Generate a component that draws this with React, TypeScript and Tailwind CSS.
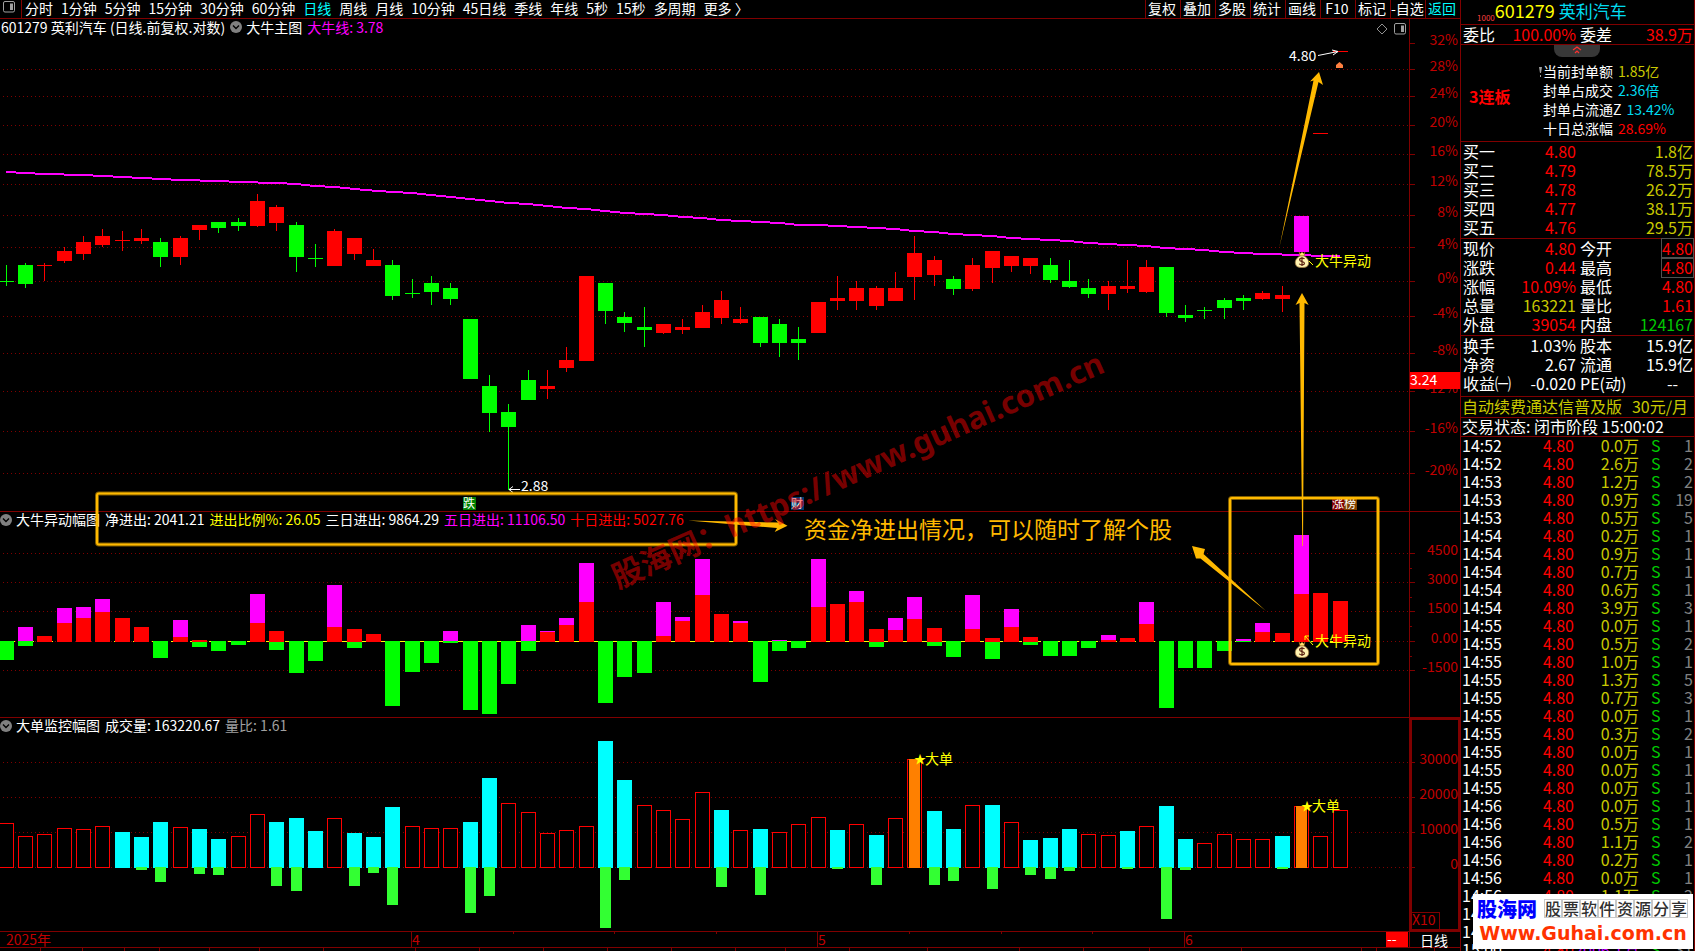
import type { ReactNode } from "react";

const RED = "#ff0000";
const GREEN = "#00ff00";
const PINK = "#ff00ff";
const LINE = "#800000";
const AXIS = "#c00000";
const GOLD = "#ffb900";

// x of the middle pixel of bar i
const cx = (i: number) => Math.floor(6 + (i * 58) / 3);

// colour, open/close top, open/close bottom, high, low
const candles: [string, number, number, number, number][] = [
  ["g", 281, 282, 265, 286], ["g", 265, 284, 263, 288], ["r", 265, 266, 263, 281], ["r", 251, 261, 247, 263],
  ["r", 242, 254, 236, 260], ["r", 236, 245, 229, 247], ["r", 240, 241, 231, 251], ["r", 238, 241, 229, 244],
  ["g", 242, 257, 238, 267], ["r", 238, 257, 236, 265], ["r", 225, 230, 225, 240], ["g", 222, 228, 222, 233],
  ["g", 222, 226, 218, 231], ["r", 201, 226, 194, 227], ["r", 207, 223, 205, 231], ["g", 225, 257, 222, 272],
  ["g", 258, 259, 244, 267], ["r", 231, 266, 229, 266], ["r", 238, 254, 238, 260], ["r", 260, 266, 249, 266],
  ["g", 265, 296, 260, 300], ["g", 293, 294, 279, 298], ["g", 283, 292, 276, 305], ["g", 288, 299, 283, 305],
  ["g", 319, 379, 319, 379], ["g", 386, 413, 375, 432], ["g", 412, 427, 404, 490], ["g", 380, 400, 370, 400],
  ["r", 386, 389, 370, 399], ["r", 360, 368, 347, 372], ["r", 276, 361, 276, 361], ["g", 283, 311, 283, 324],
  ["g", 317, 323, 312, 332], ["g", 327, 330, 307, 347], ["r", 324, 333, 324, 334], ["r", 327, 330, 319, 334],
  ["r", 312, 328, 305, 328], ["r", 300, 318, 291, 324], ["r", 319, 323, 307, 324], ["g", 317, 343, 317, 347],
  ["g", 324, 343, 319, 357], ["g", 339, 343, 327, 360], ["r", 302, 333, 302, 333], ["r", 298, 301, 276, 310],
  ["r", 288, 301, 281, 310], ["r", 288, 306, 286, 310], ["r", 288, 301, 272, 301], ["r", 253, 277, 236, 300],
  ["r", 260, 275, 256, 286], ["g", 279, 289, 276, 295], ["r", 265, 289, 258, 291], ["r", 251, 268, 251, 283],
  ["r", 256, 266, 256, 272], ["r", 258, 266, 258, 274], ["g", 265, 280, 258, 283], ["g", 281, 287, 260, 288],
  ["g", 288, 294, 279, 298], ["r", 286, 294, 281, 310], ["r", 286, 289, 260, 293], ["r", 267, 292, 260, 293],
  ["g", 267, 313, 267, 317], ["g", 315, 318, 305, 322], ["g", 310, 311, 307, 319], ["g", 300, 308, 298, 319],
  ["g", 298, 301, 295, 310], ["r", 293, 299, 291, 300], ["r", 295, 299, 286, 312], ["m", 216, 252, 216, 252],
  ["r", 133, 134, 133, 134], ["r", 51, 52, 51, 52],
];

const maLine =
  "6,172 25,173 44,174 83,175 103,176 122,177 142,178 180,180 219,181 238,182 277,183 296,184 315,186 335,187 345,188 365,190 393,192 412,193 431,195 451,197 470,199 490,201 509,203 528,204 548,206 567,208 586,209 605,211 625,213 644,214 663,215 683,217 702,218 721,220 741,221 760,222 780,223 799,225 818,225 837,226 857,227 876,228 895,229 914,231 934,232 953,234 972,235 992,236 1011,238 1030,239 1050,240 1069,241 1088,243 1107,244 1127,245 1146,246 1165,248 1185,249 1204,250 1224,252 1243,253 1262,254 1301,255 1320,256 1340,256";

// top of the pink part, top of the red part, bottom of the green part (0 = none)
const flows: [number, number, number][] = [
  [0, 0, 660], [627, 0, 646], [0, 636, 0], [608, 623, 0], [607, 618, 0], [599, 612, 0], [0, 618, 0],
  [0, 627, 0], [0, 0, 658], [620, 637, 0], [0, 640, 647], [0, 0, 651], [0, 0, 645], [594, 623, 0],
  [0, 631, 650], [0, 0, 673], [0, 0, 661], [585, 627, 0], [0, 629, 648], [0, 634, 0], [0, 0, 706],
  [0, 0, 672], [0, 0, 663], [631, 0, 643], [0, 0, 710], [0, 0, 714], [0, 0, 684], [625, 0, 651],
  [631, 632, 0], [618, 625, 0], [563, 602, 0], [0, 0, 703], [0, 0, 677], [0, 0, 673], [602, 636, 0],
  [617, 621, 0], [559, 595, 0], [0, 614, 0], [621, 623, 0], [0, 0, 682], [640, 0, 651], [0, 0, 648],
  [559, 607, 0], [0, 604, 0], [591, 602, 0], [0, 629, 647], [618, 630, 0], [597, 619, 0], [0, 628, 646],
  [0, 0, 657], [595, 629, 0], [0, 638, 659], [609, 627, 0], [0, 637, 645], [0, 0, 656], [0, 0, 656],
  [0, 0, 648], [635, 640, 0], [0, 638, 0], [602, 624, 0], [0, 0, 708], [0, 0, 668], [0, 0, 668],
  [0, 0, 651], [639, 0, 642], [623, 632, 0], [0, 633, 0], [535, 594, 0], [0, 593, 0], [0, 601, 0],
];

// kind (h hollow, c cyan, o big order), top, bottom of the green part
const volumes: [string, number, number][] = [
  ["h", 823, 0], ["h", 836, 0], ["h", 834, 0], ["h", 828, 0], ["h", 829, 0], ["h", 826, 0], ["c", 832, 0],
  ["c", 837, 870], ["c", 822, 882], ["h", 827, 0], ["c", 829, 874], ["c", 839, 875], ["h", 836, 0], ["h", 814, 0],
  ["c", 822, 886], ["c", 818, 891], ["c", 831, 0], ["h", 818, 0], ["c", 833, 886], ["c", 837, 873], ["c", 807, 905],
  ["h", 826, 0], ["h", 828, 0], ["h", 828, 0], ["c", 822, 913], ["c", 778, 896], ["h", 803, 0], ["h", 812, 0],
  ["h", 833, 0], ["h", 830, 0], ["h", 826, 0], ["c", 741, 928], ["c", 780, 880], ["h", 805, 0], ["h", 810, 0],
  ["h", 819, 0], ["h", 792, 0], ["c", 810, 887], ["h", 830, 0], ["c", 829, 895], ["h", 832, 0], ["h", 824, 0],
  ["h", 817, 0], ["c", 830, 869], ["h", 824, 0], ["c", 835, 885], ["h", 818, 0], ["o", 759, 0], ["c", 811, 885],
  ["c", 829, 881], ["h", 805, 0], ["c", 805, 889], ["h", 822, 0], ["c", 840, 875], ["c", 838, 879], ["c", 829, 871],
  ["h", 834, 0], ["h", 835, 0], ["c", 831, 869], ["h", 826, 0], ["c", 806, 919], ["c", 839, 870], ["h", 843, 0],
  ["h", 834, 0], ["h", 839, 0], ["h", 839, 0], ["c", 836, 869], ["o", 806, 0], ["h", 836, 0], ["h", 810, 0],
];

const periods = [
  "分时", "1分钟", "5分钟", "15分钟", "30分钟", "60分钟", "日线", "周线", "月线", "10分钟",
  "45日线", "季线", "年线", "5秒", "15秒", "多周期", "更多 〉",
];
const tools = ["复权", "叠加", "多股", "统计", "画线", "F10", "标记", "-自选", "返回"];

const percentAxis: [string, number][] = [
  ["32%", 43], ["28%", 69], ["24%", 96], ["20%", 125], ["16%", 154], ["12%", 184], ["8%", 215],
  ["4%", 247], ["0%", 281], ["-4%", 316], ["-8%", 353], ["-12%", 391], ["-16%", 431], ["-20%", 473],
];
const flowAxis: [string, number][] = [["4500", 553], ["3000", 582], ["1500", 611], ["0.00", 641], ["-1500", 670]];
const volumeAxis: [string, number][] = [["30000", 762], ["20000", 797], ["10000", 832], ["0", 867]];

const bids = [
  ["买一", "4.80", "1.8亿"],
  ["买二", "4.79", "78.5万"],
  ["买三", "4.78", "26.2万"],
  ["买四", "4.77", "38.1万"],
  ["买五", "4.76", "29.5万"],
];

const R = "text-[#ff0000]";
const Y = "text-[#c8c800]";
const G = "text-[#00c800]";
const W = "text-white";

const quotes = [
  ["现价", "4.80", R, "今开", "4.80", R, "box"],
  ["涨跌", "0.44", R, "最高", "4.80", R, "box"],
  ["涨幅", "10.09%", R, "最低", "4.80", R, ""],
  ["总量", "163221", Y, "量比", "1.61", R, ""],
  ["外盘", "39054", R, "内盘", "124167", G, ""],
];
const basics = [
  ["换手", "1.03%", W, "股本", "15.9亿", W, ""],
  ["净资", "2.67", W, "流通", "15.9亿", W, ""],
  ["收益㈠", "-0.020", W, "PE(动)", "--", W, "dash"],
];

const ticks = [
  ["14:52", "0.0", "1"], ["14:52", "2.6", "2"], ["14:53", "1.2", "2"], ["14:53", "0.9", "19"], ["14:53", "0.5", "5"],
  ["14:54", "0.2", "1"], ["14:54", "0.9", "1"], ["14:54", "0.7", "1"], ["14:54", "0.6", "1"], ["14:54", "3.9", "3"],
  ["14:55", "0.0", "1"], ["14:55", "0.5", "2"], ["14:55", "1.0", "1"], ["14:55", "1.3", "5"], ["14:55", "0.7", "3"],
  ["14:55", "0.0", "1"], ["14:55", "0.3", "2"], ["14:55", "0.0", "1"], ["14:55", "0.0", "1"], ["14:55", "0.0", "1"],
  ["14:56", "0.0", "1"], ["14:56", "0.5", "1"], ["14:56", "1.1", "2"], ["14:56", "0.2", "1"], ["14:56", "0.0", "1"],
  ["14:56", "1.1", "2"], ["14:56", "0.1", "1"], ["14:56", "0.4", "1"], ["15:00", "2006.1", "31"],
];

function PanelIcon() {
  return (
    <svg viewBox="0 0 12 12" className="h-3 w-3" fill="none">
      <rect x="0.5" y="0.5" width="11" height="10.5" rx="1.5" stroke="#a0a0a0" />
      <rect x="7" y="2.5" width="3" height="6.5" fill="#a0a0a0" />
    </svg>
  );
}

function Toggle({ label }: { label: string }) {
  return (
    <button aria-label={label} className="h-3 w-3 shrink-0">
      <svg viewBox="0 0 12 12" className="h-3 w-3">
        <circle cx="6" cy="6" r="6" fill="#808080" />
        <path d="M3 4.5 L6 7.5 L9 4.5" stroke="#000" strokeWidth="1.4" fill="none" />
      </svg>
    </button>
  );
}

function Grid({ rows, skipFirst }: { rows: [string, number][]; skipFirst?: boolean }) {
  return (
    <g shapeRendering="crispEdges">
      {rows.map(([label, y], i) => (
        <g key={label}>
          {!(skipFirst && i === 0) && (
            <line x1="3" x2="1409" y1={y + 0.5} y2={y + 0.5} stroke={LINE} strokeDasharray="1 3" />
          )}
          <rect x="1410" y={y} width="5" height="1" fill={LINE} />
        </g>
      ))}
    </g>
  );
}

function AxisLabels({ rows }: { rows: [string, number][] }) {
  return (
    <g fill={AXIS} textAnchor="end">
      {rows.map(([label, y]) => (
        <text key={label} x="1458" y={y + 2}>
          {label}
        </text>
      ))}
    </g>
  );
}

function Panel({ top, height, children, header }: { top: number; height: number; children: ReactNode; header?: ReactNode }) {
  return (
    <section className="relative">
      <svg viewBox={`0 ${top} 1460 ${height}`} className="block w-full text-sm">
        {children}
        <rect x="1409" y={top} width="1" height={height} fill={LINE} />
        <rect x="0" y={top + height - 1} width="1460" height="1" fill={LINE} />
      </svg>
      {header}
    </section>
  );
}

function MoneyBag({ x, y }: { x: number; y: number }) {
  return (
    <g transform={`translate(${x} ${y})`}>
      <path d="M-3 -9 L-1.5 -7.5 L0 -9 L1.5 -7.5 L3 -9 L2 -5 L-2 -5 Z" fill="#ffe070" stroke="#8a5a00" strokeWidth="0.5" />
      <path d="M-2 -5 C-7 -2 -7 1 -6.5 3 C-6 6 -3 6.5 0 6.5 C3 6.5 6 6 6.5 3 C7 1 7 -2 2 -5 Z" fill="#fff3b0" stroke="#a07840" strokeWidth="0.8" />
      <path d="M2.5 -2 C1.5 -3.4 -2.6 -3.2 -2.4 -1 C-2.2 1 2.6 0.2 2.5 2.4 C2.3 4.4 -1.8 4.4 -2.7 2.8 M0 -4 V5" stroke="#5a2010" strokeWidth="1.2" fill="none" />
    </g>
  );
}

function Signal({ y }: { y: number }) {
  return (
    <g>
      <path d={`M1313 ${y + 4} L1305 ${y - 5} M1305 ${y - 1} V${y - 5} H1309`} stroke="#ffff00" fill="none" />
      <text x="1315" y={y + 5} fill="#ffff00">大牛异动</text>
    </g>
  );
}

function MainChart() {
  return (
    <Panel
      top={19}
      height={493}
      header={
        <>
          <div className="absolute top-0 left-px flex items-center gap-1 text-sm leading-4 whitespace-nowrap">
            <h1 className="pr-px">601279 英利汽车 (日线.前复权.对数)</h1>
            <Toggle label="大牛主图" />
            <span>大牛主图</span>
            <span className="pl-px text-[#ff00ff]">大牛线: 3.78</span>
          </div>
          <div className="absolute top-1 right-[54px] flex items-center gap-1.5">
            <button aria-label="标注">
              <svg viewBox="0 0 12 12" className="h-3 w-3" fill="none">
                <path d="M6 1 L11 6 L6 11 L1 6 Z" stroke="#909090" />
              </svg>
            </button>
            <button aria-label="侧栏">
              <PanelIcon />
            </button>
          </div>
        </>
      }
    >
      <Grid rows={percentAxis} skipFirst />
      <AxisLabels rows={percentAxis} />
      <g shapeRendering="crispEdges">
        {candles.map(([kind, top, bottom, high, low], i) => {
          const fill = kind === "g" ? GREEN : kind === "r" ? RED : PINK;
          return (
            <g key={i} fill={fill}>
              <rect x={cx(i)} y={high} width="1" height={low - high} />
              <rect x={cx(i) - 7} y={top} width="15" height={bottom - top} />
            </g>
          );
        })}
        <polyline points={maLine} fill="none" stroke={PINK} strokeWidth="2" />
      </g>
      <MoneyBag x={1302} y={261} />
      <path d="M1309 261 L1313 265" stroke="#ffff00" />
      <text x="1315" y="266" fill="#ffff00">大牛异动</text>

      <rect x="1410" y="372" width="50" height="17" fill={RED} />
      <text x="1410" y="385" fill="#fff">3.24</text>

      <path d="M520 489.500 H509 M513 486.500 L509 489.500 L513 492.500" stroke="#fff" fill="none" />
      <text x="521" y="491" fill="#fff">2.88</text>
      <text x="1289" y="61" fill="#fff">4.80</text>
      <path d="M1318 55.500 L1338 51.500 M1332 50 L1338 51.500 L1333 55" stroke="#fff" fill="none" />
      <path d="M1336 68 V65 L1339.500 62 L1343 65 V68 Z" fill="#ff8040" />

      <g fontSize="12" fill="#fff">
        <rect x="463" y="497" width="13" height="13" fill="#008000" />
        <text x="463" y="508">跌</text>
        <rect x="791" y="497" width="13" height="13" fill="#003870" />
        <text x="791" y="508">财</text>
        <rect x="1332" y="498" width="12" height="12" fill="#800000" />
        <text x="1332" y="508">涨</text>
        <rect x="1344" y="498" width="13" height="12" fill="#804000" />
        <text x="1344" y="508">榜</text>
      </g>
    </Panel>
  );
}

function FlowChart() {
  return (
    <Panel
      top={512}
      height={206}
      header={
        <div className="absolute top-0 left-0 flex items-center gap-[5px] text-sm leading-[15px] whitespace-nowrap">
          <div className="flex items-center gap-1">
            <Toggle label="大牛异动幅图" />
            <h2>大牛异动幅图</h2>
          </div>
          <span>净进出: 2041.21</span>
          <span className="text-[#ffff00]">进出比例%: 26.05</span>
          <span>三日进出: 9864.29</span>
          <span className="text-[#ff00ff]">五日进出: 11106.50</span>
          <span className="text-[#ff0000]">十日进出: 5027.76</span>
        </div>
      }
    >
      <Grid rows={flowAxis} />
      <AxisLabels rows={flowAxis} />
      <g shapeRendering="crispEdges">
        {[568, 597, 626, 656].map((y) => (
          <rect key={y} x="1410" y={y} width="2" height="1" fill={LINE} />
        ))}
        <line x1="0" x2="1347" y1="641.5" y2="641.5" stroke="#ffff00" strokeDasharray="15 4" />
        {flows.map(([pink, red, green], i) => (
          <g key={i}>
            {pink > 0 && <rect x={cx(i) - 7} y={pink} width="15" height={(red || 641) - pink} fill={PINK} />}
            {red > 0 && <rect x={cx(i) - 7} y={red} width="15" height={642 - red} fill={RED} />}
            {green > 0 && (
              <rect x={cx(i) - 7} y={red > 0 ? 642 : 641} width="15" height={green - (red > 0 ? 642 : 641)} fill={GREEN} />
            )}
          </g>
        ))}
      </g>
      <MoneyBag x={1302} y={651} />
      <Signal y={641} />
    </Panel>
  );
}

function VolumeChart() {
  return (
    <Panel
      top={718}
      height={214}
      header={
        <div className="absolute top-0 left-0 flex items-center gap-[5px] text-sm leading-[15px] whitespace-nowrap">
          <div className="flex items-center gap-1">
            <Toggle label="大单监控幅图" />
            <h2>大单监控幅图</h2>
          </div>
          <span>成交量: 163220.67</span>
          <span className="text-[#a0a0a0]">量比: 1.61</span>
        </div>
      }
    >
      <Grid rows={volumeAxis} />
      <AxisLabels rows={volumeAxis} />
      <g shapeRendering="crispEdges">
        {[780, 815, 850].map((y) => (
          <rect key={y} x="1410" y={y} width="2" height="1" fill={LINE} />
        ))}
        {volumes.map(([kind, top, green], i) => (
          <g key={i}>
            {kind === "c" ? (
              <rect x={cx(i) - 7} y={top} width="15" height={868 - top} fill="#00ffff" />
            ) : (
              <rect x={cx(i) - 6.5} y={top + 0.5} width="14" height={867 - top} fill="#000" stroke={RED} />
            )}
            {kind === "o" && <rect x={cx(i) - 5} y={top} width="11" height={868 - top} fill="#ff8000" />}
            {green > 0 && <rect x={cx(i) - 5} y="867" width="11" height={green - 867} fill="#33ff33" />}
          </g>
        ))}
        <rect x="1411" y="719" width="48" height="211" fill="none" stroke={LINE} strokeWidth="2" />
        <rect x="1410.5" y="912.5" width="29" height="18" fill="none" stroke={LINE} />
      </g>
      <g fill="#ffff00">
        <text x="914" y="764" fontSize="12">★</text>
        <text x="925" y="764">大单</text>
        <text x="1301" y="811" fontSize="12">★</text>
        <text x="1312" y="811">大单</text>
      </g>
      <text x="1412" y="925" fill={AXIS}>X10</text>
    </Panel>
  );
}

function TimeAxis() {
  const months: [string, number][] = [["4", 411], ["5", 817], ["6", 1184]];
  const upper = [513, 614, 716, 909, 1001, 1092];
  const lower = [
    40, 82, 124, 159, 209, 259, 323, 415, 479, 543, 607, 671, 735, 785, 849, 927, 1019, 1083, 1149, 1241, 1361, 1376, 1434,
  ];
  return (
    <svg viewBox="0 932 1460 19" className="block w-full overflow-visible text-sm">
      <g fill={LINE}>
        <rect x="0" y="947" width="1460" height="1" />
        <rect x="1409" y="932" width="1" height="16" />
        {upper.map((x) => <rect key={x} x={x} y="932" width="1" height="2" />)}
        {lower.map((x) => <rect key={x} x={x} y="948" width="1" height="3" />)}
        {months.map(([m, x]) => <rect key={m} x={x} y="932" width="1" height="15" />)}
      </g>
      <g fill={AXIS}>
        <text x="6" y="945">2025年</text>
        {months.map(([m, x]) => <text key={m} x={x + 1} y="945">{m}</text>)}
      </g>
      <rect x="1386" y="932" width="22" height="15" fill={RED} />
      <text x="1387" y="944" fill="#fff">--</text>
      <text x="1420" y="946" fill="#fff">日线</text>
    </svg>
  );
}

// Hand-made marks on top of the three charts
function Annotations() {
  return (
    <svg viewBox="0 0 1460 951" className="pointer-events-none absolute top-0 left-0 w-full">
      <g fill="none" stroke={GOLD}>
        <rect x="97" y="493.500" width="639" height="51" rx="2" strokeWidth="4" strokeOpacity="0.5" />
        <rect x="97" y="493.500" width="639" height="51" rx="2" strokeWidth="2" />
        <rect x="1230" y="498" width="148" height="166" rx="2" strokeWidth="4" strokeOpacity="0.5" />
        <rect x="1230" y="498" width="148" height="166" rx="2" strokeWidth="2" />
      </g>
      <g fill={GOLD}>
        <path d="M688 520.500 L778 522.500 L775 519 L787.500 525.700 L774.700 532 L777 528 Z" />
        <path d="M1266 611 L1200.500 558.500 L1196 558.500 L1192 546 L1205 549 L1203.500 554 Z" />
        <path d="M1279.300 247.500 L1313.500 80.500 L1310 81.500 L1319 72 L1323 85 L1318.500 82 Z" />
        <path d="M1302.300 546 L1299.500 303 L1295.500 305 L1302 293 L1308.700 305 L1304.500 303 L1303 546 Z" />
      </g>
      <text x="804" y="538" fontSize="23" fill={GOLD}>资金净进出情况，可以随时了解个股</text>
      <text
        x="618"
        y="589"
        transform="rotate(-24 618 589)"
        fontSize="31"
        fontWeight="700"
        fill={RED}
        fillOpacity="0.48"
        className="font-['Noto_Sans','Noto_Sans_CJK_SC',sans-serif]"
      >
        股海网：https://www.guhai.com.cn
      </text>
    </svg>
  );
}

function QuoteTable({ rows }: { rows: string[][] }) {
  return (
    <table className="w-full table-fixed border-collapse leading-[19px]">
      <colgroup>
        <col className="w-[50px]" />
        <col className="w-[65px]" />
        <col className="w-[54px]" />
        <col />
      </colgroup>
      <tbody>
        {rows.map(([a, av, ac, b, bv, bc, mark]) => (
          <tr key={a} className="h-[19px] whitespace-nowrap">
            <th scope="row" className="p-0 pl-0.5 text-left font-normal">{a}</th>
            <td className={`p-0 text-right ${ac}`}>{av}</td>
            <th scope="row" className="p-0 pl-1 text-left font-normal">{b}</th>
            <td className={`p-0 text-right ${bc} ${mark === "dash" ? "pr-4" : "pr-px"}`}>
              <span className={mark === "box" ? "inline-block outline outline-[#505050]" : ""}>{bv}</span>
            </td>
          </tr>
        ))}
      </tbody>
    </table>
  );
}

function Sidebar() {
  return (
    <aside className="relative w-[235px] shrink-0 overflow-hidden border-x border-[#800000] text-base">
      <header className="flex h-[25px] border-b border-[#800000] pl-4 leading-[21px] whitespace-nowrap">
        <span className="self-end text-[8px] leading-3 text-[#ff4040]">1000</span>
        <span className="text-lg leading-[21px] text-[#ffff00]">601279</span>
        <h2 className="pl-1 text-[17px] leading-[21px] text-[#00dcf0]">英利汽车</h2>
      </header>
      <div className="h-5 border-b border-[#800000]">
        <QuoteTable rows={[["委比", "100.00%", R, "委差", "38.9万", R, ""]]} />
      </div>

      <div className="relative flex h-[97px] items-center border-b border-[#800000]">
        <button aria-label="收起" className="absolute top-0 left-[93px] flex h-3 w-[46px] justify-center rounded-b-lg bg-[#383838]">
          <svg viewBox="0 0 10 8" className="mt-px h-2 w-[10px]" fill="none" stroke="#ff3030" strokeWidth="1.2">
            <path d="M1 4 L5 1 L9 4 M3 7 L5 5 L7 7" />
          </svg>
        </button>
        <div className="w-[78px] pt-1.5 pl-2 font-bold text-[#ff0000]">3连板</div>
        <ul className="pt-3.5 text-sm leading-[19px] whitespace-nowrap">
          <li className="flex items-center">
            <svg viewBox="0 0 4 10" className="h-[10px] w-1" fill="#a0a0a0">
              <path d="M0 0 H3 L2 6 H1 Z M1 8 H2 V10 H1 Z" />
            </svg>
            <span>当前封单额</span>
            <span className="pl-[5px] text-[#c8c800]">1.85亿</span>
          </li>
          <li className="flex gap-[5px] pl-1">封单占成交<span className="text-[#00dcf0]">2.36倍</span></li>
          <li className="flex gap-[5px] pl-1">封单占流通Z<span className="text-[#00dcf0]">13.42%</span></li>
          <li className="flex gap-[5px] pl-1">十日总涨幅<span className="text-[#ff0000]">28.69%</span></li>
        </ul>
      </div>

      <div className="h-[97px] border-b border-[#800000]">
        <table className="w-full table-fixed border-collapse leading-[19px]">
          <tbody>
            {bids.map(([name, price, amount]) => (
              <tr key={name} className="h-[19px]">
                <th scope="row" className="w-[50px] p-0 pl-0.5 text-left font-normal">{name}</th>
                <td className="w-[65px] p-0 text-right text-[#ff0000]">{price}</td>
                <td className="p-0 pr-px text-right text-[#c8c800]">{amount}</td>
              </tr>
            ))}
          </tbody>
        </table>
      </div>
      <div className="h-[97px] border-b border-[#800000]">
        <QuoteTable rows={quotes} />
      </div>
      <div className="h-[61px] border-b border-[#800000]">
        <QuoteTable rows={basics} />
      </div>
      <a href="#renew" className="flex h-[21px] justify-between border-b border-[#800000] pr-1.5 pl-px leading-[18px] whitespace-nowrap text-[#c8c800]">
        <span>自动续费通达信普及版</span>
        <span>30元/月</span>
      </a>
      <p className="h-[19px] border-b border-[#800000] pl-px leading-4 whitespace-nowrap">交易状态: 闭市阶段 15:00:02</p>

      <table className="w-full table-fixed border-collapse leading-4">
        <colgroup>
          <col className="w-[50px]" />
          <col className="w-[63px]" />
          <col className="w-[65px]" />
          <col className="w-[25px]" />
          <col />
        </colgroup>
        <tbody>
          {ticks.map(([time, amount, count], i) => (
            <tr key={i} className="h-[18px]">
              <td className="p-0 pb-0.5 pl-px">{time}</td>
              <td className="p-0 pb-0.5 text-right text-[#ff0000]">4.80</td>
              <td className={`p-0 pb-0.5 text-right ${i === 28 ? "text-[#c000ff]" : "text-[#c8c800]"}`}>{amount}万</td>
              <td className="p-0 pb-0.5 pl-3 text-[#00c800]">S</td>
              <td className="p-0 pr-px pb-0.5 text-right text-[#808080]">{count}</td>
            </tr>
          ))}
        </tbody>
      </table>
    </aside>
  );
}

function SiteBanner() {
  return (
    <a href="#guhai" className="absolute right-0.5 bottom-0.5 flex h-[55px] w-[220px] flex-col items-center justify-center bg-white whitespace-nowrap">
      <span className="flex w-full items-center justify-between pr-[5px] pl-1">
        <strong className="text-xl leading-6 font-black text-[#0000ff]">股海网</strong>
        <span className="flex text-base leading-[17px] font-medium text-[#303030]">
          {"股票软件资源分享".split("").map((c) => (
            <span key={c} className="w-[18px] border border-[#c8c8c8] text-center">{c}</span>
          ))}
        </span>
      </span>
      <strong className="pb-0.5 font-['DejaVu_Sans',sans-serif] text-[19px] leading-6 font-black text-[#ff3300]">Www.Guhai.com.cn</strong>
    </a>
  );
}

export default function App() {
  return (
    <div className="relative flex h-screen overflow-hidden bg-black font-['Noto_Sans_CJK_SC',sans-serif] text-white">
      <main className="relative min-w-0 flex-1">
        <nav className="flex h-[19px] border-b border-[#800000] text-sm leading-4 whitespace-nowrap">
          <button aria-label="布局" className="flex w-[22px] items-center justify-center border-r border-[#800000] pr-1 pb-1">
            <PanelIcon />
          </button>
          <div className="flex flex-1 gap-2 pl-[3px]">
            {periods.map((p) => (
              <button key={p} className={`pb-0.5 ${p === "日线" ? "text-[#00ffff]" : ""}`}>{p}</button>
            ))}
          </div>
          <div className="flex">
            {tools.map((t) => (
              <button
                key={t}
                className={`w-[35px] border-l border-[#800000] pr-0.5 pb-0.5 text-center ${t === "返回" ? "text-[#00ffff]" : ""}`}
              >
                {t}
              </button>
            ))}
          </div>
        </nav>
        <MainChart />
        <FlowChart />
        <VolumeChart />
        <TimeAxis />
        <Annotations />
      </main>
      <Sidebar />
      <SiteBanner />
    </div>
  );
}
